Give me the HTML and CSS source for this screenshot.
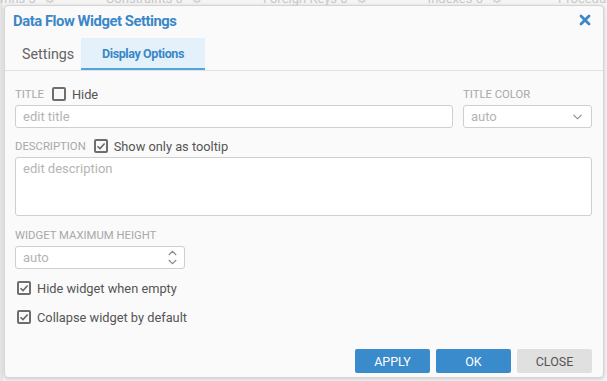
FILE: index.html
```html
<!DOCTYPE html>
<html>
<head>
<meta charset="utf-8">
<link rel="stylesheet" href="styles.css">
</head>
<body>
<div class="backdrop">
  <div class="bg-tabs">
    <span class="bg-tab">mns 3</span><span class="gear">⚙</span>
    <span class="bg-tab w1">Constraints 0</span><span class="gear">⚙</span>
    <span class="bg-tab w2">Foreign Keys 0</span><span class="gear">⚙</span>
    <span class="bg-tab w3">Indexes 0</span><span class="gear">⚙</span>
    <span class="bg-tab w4">Procedures 0</span><span class="gear">⚙</span>
  </div>
</div>

<div class="dialog">
  <div class="header">
    <span class="title">Data Flow Widget Settings</span>
    <svg class="close" width="12" height="12" viewBox="0 0 12 12"><path d="M2 2 L10 10 M10 2 L2 10" stroke="#3a87c8" stroke-width="2.8" stroke-linecap="round"/></svg>
  </div>
  <div class="tabs">
    <div class="tab">Settings</div>
    <div class="tab active">Display Options</div>
  </div>
  <div class="body">
    <div class="row">
      <div class="col-main">
        <div class="label-row">
          <span class="label">Title</span>
          <span class="cb"></span>
          <span class="cb-text">Hide</span>
        </div>
        <div class="input">edit title</div>
      </div>
      <div class="col-side">
        <div class="label-row"><span class="label">Title color</span></div>
        <div class="input select">auto
          <svg class="chev" width="9" height="6" viewBox="0 0 9 6"><path d="M0.5 0.8 L4.5 4.8 L8.5 0.8" fill="none" stroke="#888" stroke-width="1.1"/></svg>
        </div>
      </div>
    </div>
    <div class="label-row gap-top">
      <span class="label">Description</span>
      <span class="cb checked"><svg width="10" height="10" viewBox="0 0 10 10"><path d="M1.5 5.2 L4 7.6 L8.6 2.4" fill="none" stroke="#666" stroke-width="1.5"/></svg></span>
      <span class="cb-text">Show only as tooltip</span>
    </div>
    <div class="input textarea">edit description</div>
    <div class="label-row gap-top2"><span class="label">Widget maximum height</span></div>
    <div class="input number">auto
      <svg class="spin" width="9" height="15" viewBox="0 0 9 15"><path d="M0.8 5 L4.5 1.3 L8.2 5 M0.8 10 L4.5 13.7 L8.2 10" fill="none" stroke="#888" stroke-width="1.1"/></svg>
    </div>
    <div class="check-line first">
      <span class="cb checked"><svg width="10" height="10" viewBox="0 0 10 10"><path d="M1.5 5.2 L4 7.6 L8.6 2.4" fill="none" stroke="#666" stroke-width="1.5"/></svg></span>
      <span class="cb-text">Hide widget when empty</span>
    </div>
    <div class="check-line second">
      <span class="cb checked"><svg width="10" height="10" viewBox="0 0 10 10"><path d="M1.5 5.2 L4 7.6 L8.6 2.4" fill="none" stroke="#666" stroke-width="1.5"/></svg></span>
      <span class="cb-text">Collapse widget by default</span>
    </div>
  </div>
  <div class="footer">
    <button class="btn primary">Apply</button>
    <button class="btn primary">OK</button>
    <button class="btn secondary">Close</button>
  </div>
</div>
</body>
</html>
```

FILE: styles.css
```css
* { box-sizing: border-box; }
html, body { margin: 0; padding: 0; }
body {
  width: 607px;
  height: 381px;
  overflow: hidden;
  background: #f3f3f3;
  font-family: Roboto, "Noto Sans", sans-serif;
  position: relative;
}
.backdrop {
  height: 381px;
  overflow: hidden;
  background: linear-gradient(to right, #e6e6e6 0, #e6e6e6 3px, #f5f5f5 3px);
}
.bg-tabs {
  display: flex;
  align-items: center;
  height: 14px;
  margin-top: -9px;
  font-size: 13px;
  color: #c8c8c8;
  white-space: nowrap;
  overflow: hidden;
}
.gear { margin-left: 8px; color: #d0d0d0; font-size: 13px; }
.w1 { margin-left: 50px; }
.w2 { margin-left: 60px; }
.w3 { margin-left: 60px; }
.w4 { margin-left: 55px; }

.dialog {
  position: absolute;
  left: 4px;
  top: 5px;
  width: 600px;
  height: 373px;
  background: #fafafa;
  border: 1px solid #d4d4d4;
  border-radius: 4px;
  box-shadow: 0 1px 4px rgba(0,0,0,0.18);
  display: flex;
  flex-direction: column;
}
.header {
  height: 32px;
  display: flex;
  align-items: center;
  justify-content: space-between;
  padding: 0 12px 0 8px;
}
.title {
  font-size: 14.8px;
  font-weight: 700;
  color: #3a87c8;
  letter-spacing: -0.45px;
  margin-top: -3px;
}
.close { margin-top: -4px; }
.tabs {
  display: flex;
  height: 33px;
  border-bottom: 1px solid #e2e2e2;
  padding-left: 5px;
}
.tab {
  width: 71px;
  padding-left: 12px;
  font-size: 14.3px;
  color: #646464;
  display: flex;
  align-items: center;
}
.tab.active {
  width: 124px;
  padding-left: 0;
  justify-content: center;
  background: #e4f1fb;
  color: #3a87c8;
  font-weight: 700;
  font-size: 12.5px;
  letter-spacing: -0.4px;
  border-bottom: 2px solid #52a6de;
  height: 32px;
}
.body {
  padding: 16px 11px 0 10px;
  flex: 1;
}
.row { display: flex; gap: 10px; }
.col-main { flex: 1; }
.col-side { width: 129px; }
.label-row {
  display: flex;
  align-items: center;
  height: 14px;
  margin-bottom: 4px;
}
.label {
  font-size: 11.3px;
  text-transform: uppercase;
  color: #a8a8a8;
}
.cb {
  width: 14px;
  height: 14px;
  border: 2px solid #6e6e6e;
  border-radius: 2px;
  margin-left: 8px;
  display: flex;
  align-items: center;
  justify-content: center;
  flex: none;
}
.cb svg { display: block; }
.cb-text {
  font-size: 12.8px;
  color: #555;
  margin-left: 6px;
}
.input {
  height: 23px;
  background: #fff;
  border: 1px solid #cfcfcf;
  border-radius: 3px;
  font-size: 13px;
  color: #b4b4b4;
  padding: 0 7px;
  display: flex;
  align-items: center;
  position: relative;
}
.select { justify-content: space-between; padding-right: 9px; }
.gap-top { margin-top: 11px; }
.textarea {
  height: 59px;
  align-items: flex-start;
  padding-top: 3px;
  margin-top: 1px;
}
.gap-top2 { margin-top: 12px; }
.number {
  width: 170px;
  margin-top: 2px;
  justify-content: space-between;
  padding-right: 7px;
}
.check-line {
  display: flex;
  align-items: center;
  height: 14px;
}
.check-line .cb { margin-left: 2px; }
.first { margin-top: 12px; }
.second { margin-top: 15px; }
.footer {
  display: flex;
  justify-content: flex-end;
  gap: 6px;
  padding: 0 11px 4px 0;
}
.btn {
  width: 75px;
  height: 24px;
  border: none;
  border-radius: 2px;
  font-family: inherit;
  font-size: 12.5px;
  text-transform: uppercase;
  padding: 0;
}
.primary { background: #3a8bcb; color: #fff; }
.secondary { background: #e0e0e0; color: #555; }
```
